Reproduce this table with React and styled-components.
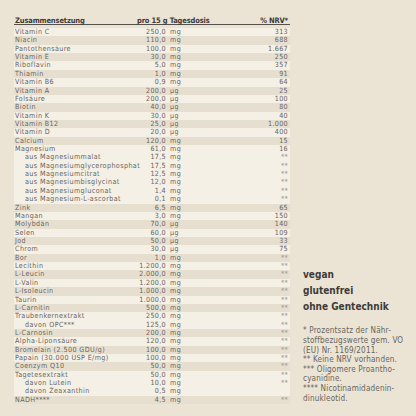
import React from "react";
import styled, { createGlobalStyle } from "styled-components";

const Global = createGlobalStyle`
  html, body { margin: 0; padding: 0; background: #ebe4d4; }
  body { width: 416px; height: 416px; overflow: hidden; }
`;

const Page = styled.div`
  width: 416px;
  box-sizing: border-box;
  padding: 14px 0 0 14px;
  display: flex;
  align-items: stretch;
  gap: 13px;
  font-family: "DejaVu Sans Condensed", "DejaVu Sans", sans-serif;
  background: #ebe4d4;
`;

const Table = styled.div`
  width: 276px;
  display: flex;
  flex-direction: column;
`;

const Grid = styled.div`
  display: grid;
  grid-template-columns: 122px 30px 80px 42px 2px;
`;

const Header = styled(Grid)`
  height: 10px;
  align-items: end;
  border-bottom: 1px solid #55524d;
  margin-bottom: 3px;
  font-weight: bold;
  font-size: 7.5px;
  letter-spacing: -0.15px;
  color: #3d3b38;
  line-height: 6.5px;
  white-space: nowrap;
`;

const HName = styled.div`
  padding-left: 1px;
`;

const HDose = styled.div`
  grid-column: 2 / span 2;
  padding-left: 1px;
`;

const HNrv = styled.div`
  text-align: right;
`;

const Row = styled(Grid)`
  height: 8.36px;
  align-items: center;
  line-height: 8.36px;
  font-size: 7.1px;
  letter-spacing: 0.42px;
  color: #66645f;
  background: ${(p) => (p.$light ? "#f5f0e5" : "#e6dfcf")};
  white-space: nowrap;
`;

const Name = styled.div`
  padding-left: ${(p) => (p.$sub ? "11px" : "1px")};
`;

const Amount = styled.div`
  text-align: right;
  letter-spacing: 0.35px;
`;

const Unit = styled.div`
  padding-left: 4px;
`;

const Nrv = styled.div`
  text-align: right;
  letter-spacing: 0.35px;
  color: ${(p) => (p.$na ? "#9a9790" : "#66645f")};
`;

const Side = styled.div`
  display: flex;
  flex-direction: column;
  justify-content: flex-end;
  padding-bottom: 1px;
`;

const Claim = styled.div`
  font-weight: bold;
  font-size: 10px;
  line-height: 16px;
  color: #3d3b38;
`;

const Notes = styled.div`
  margin-top: 11px;
  font-size: 8.1px;
  letter-spacing: 0.15px;
  line-height: 9.6px;
  color: #66645f;
  white-space: nowrap;
`;

const data = [
  ["Vitamin C", "250,0", "mg", "313"],
  ["Niacin", "110,0", "mg", "688"],
  ["Pantothensäure", "100,0", "mg", "1.667"],
  ["Vitamin E", "30,0", "mg", "250"],
  ["Riboflavin", "5,0", "mg", "357"],
  ["Thiamin", "1,0", "mg", "91"],
  ["Vitamin B6", "0,9", "mg", "64"],
  ["Vitamin A", "200,0", "µg", "25"],
  ["Folsäure", "200,0", "µg", "100"],
  ["Biotin", "40,0", "µg", "80"],
  ["Vitamin K", "30,0", "µg", "40"],
  ["Vitamin B12", "25,0", "µg", "1.000"],
  ["Vitamin D", "20,0", "µg", "400"],
  ["Calcium", "120,0", "mg", "15"],
  ["Magnesium", "61,0", "mg", "16"],
  ["aus Magnesiummalat", "17,5", "mg", "**", true],
  ["aus Magnesiumglycerophosphat", "17,5", "mg", "**", true],
  ["aus Magnesiumcitrat", "12,5", "mg", "**", true],
  ["aus Magnesiumbisglycinat", "12,0", "mg", "**", true],
  ["aus Magnesiumgluconat", "1,4", "mg", "**", true],
  ["aus Magnesium-L-ascorbat", "0,1", "mg", "**", true],
  ["Zink", "6,5", "mg", "65"],
  ["Mangan", "3,0", "mg", "150"],
  ["Molybdän", "70,0", "µg", "140"],
  ["Selen", "60,0", "µg", "109"],
  ["Jod", "50,0", "µg", "33"],
  ["Chrom", "30,0", "µg", "75"],
  ["Bor", "1,0", "mg", "**"],
  ["Lecithin", "1.200,0", "mg", "**"],
  ["L-Leucin", "2.000,0", "mg", "**"],
  ["L-Valin", "1.200,0", "mg", "**"],
  ["L-Isoleucin", "1.000,0", "mg", "**"],
  ["Taurin", "1.000,0", "mg", "**"],
  ["L-Carnitin", "500,0", "mg", "**"],
  ["Traubenkernextrakt", "250,0", "mg", "**"],
  ["davon OPC***", "125,0", "mg", "**", true],
  ["L-Carnosin", "200,0", "mg", "**"],
  ["Alpha-Liponsäure", "120,0", "mg", "**"],
  ["Bromelain (2.500 GDU/g)", "100,0", "mg", "**"],
  ["Papain (30.000 USP E/mg)", "100,0", "mg", "**"],
  ["Coenzym Q10", "50,0", "mg", "**"],
  ["Tagetesextrakt", "50,0", "mg", "**"],
  ["davon Lutein", "10,0", "mg", "**", true],
  ["davon Zeaxanthin", "0,5", "mg", "", true],
  ["NADH****", "4,5", "mg", "**"],
];

export default function App() {
  let group = -1;
  const rows = data.map((r) => {
    if (!r[4]) group += 1;
    return { r, light: group % 2 === 0 };
  });
  return (
    <>
      <Global />
      <Page>
        <Table>
          <Header>
            <HName>Zusammensetzung</HName>
            <HDose>pro 15 g Tagesdosis</HDose>
            <HNrv>% NRV*</HNrv>
          </Header>
          {rows.map(({ r, light }, i) => (
            <Row key={i} $light={light}>
              <Name $sub={r[4]}>{r[0]}</Name>
              <Amount>{r[1]}</Amount>
              <Unit>{r[2]}</Unit>
              <Nrv $na={r[3] === "**"}>{r[3]}</Nrv>
            </Row>
          ))}
        </Table>
        <Side>
          <Claim>vegan</Claim>
          <Claim>glutenfrei</Claim>
          <Claim>ohne Gentechnik</Claim>
          <Notes>
            * Prozentsatz der Nähr-
            <br />
            stoffbezugswerte gem. VO
            <br />
            (EU) Nr. 1169/2011.
            <br />
            ** Keine NRV vorhanden.
            <br />
            *** Oligomere Proantho-
            <br />
            cyanidine.
            <br />
            **** Nicotinamidadenin-
            <br />
            dinukleotid.
          </Notes>
        </Side>
      </Page>
    </>
  );
}
